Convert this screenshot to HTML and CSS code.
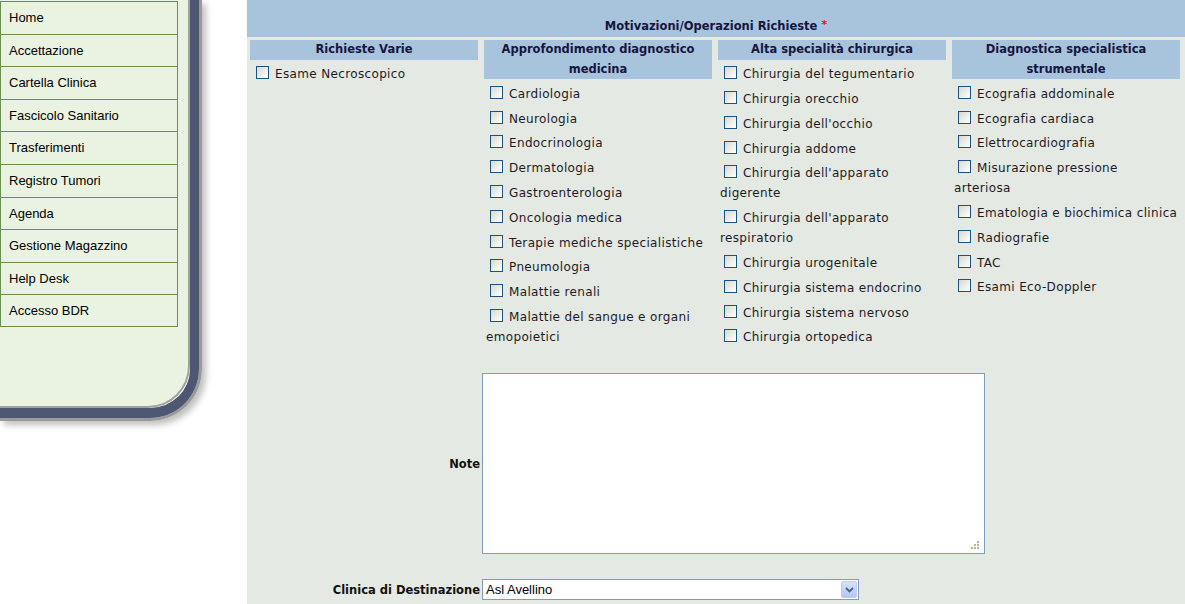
FILE: index.html
```html
<!DOCTYPE html>
<html lang="it">
<head>
<meta charset="utf-8">
<title>Motivazioni/Operazioni Richieste</title>
<link rel="stylesheet" href="styles.css">
</head>
<body>
<div class="page">
  <aside class="side">
    <div class="frame-outer">
      <div class="frame-dark">
        <div class="frame-inner">
          <nav class="menu">
            <a class="menu-link" href="#">Home</a>
            <a class="menu-link" href="#">Accettazione</a>
            <a class="menu-link" href="#">Cartella Clinica</a>
            <a class="menu-link" href="#">Fascicolo Sanitario</a>
            <a class="menu-link" href="#">Trasferimenti</a>
            <a class="menu-link" href="#">Registro Tumori</a>
            <a class="menu-link" href="#">Agenda</a>
            <a class="menu-link" href="#">Gestione Magazzino</a>
            <a class="menu-link" href="#">Help Desk</a>
            <a class="menu-link" href="#">Accesso BDR</a>
          </nav>
        </div>
      </div>
    </div>
  </aside>

  <main class="main">
    <div class="title-band">
      <span class="title">Motivazioni/Operazioni Richieste <span class="req">*</span></span>
    </div>

    <div class="cols">
      <section class="col">
        <h3 class="col-head">Richieste Varie</h3>
        <label class="item"><input type="checkbox" class="cb">Esame Necroscopico</label>
      </section>

      <section class="col">
        <h3 class="col-head">Approfondimento diagnostico medicina</h3>
        <label class="item"><input type="checkbox" class="cb">Cardiologia</label>
        <label class="item"><input type="checkbox" class="cb">Neurologia</label>
        <label class="item"><input type="checkbox" class="cb">Endocrinologia</label>
        <label class="item"><input type="checkbox" class="cb">Dermatologia</label>
        <label class="item"><input type="checkbox" class="cb">Gastroenterologia</label>
        <label class="item"><input type="checkbox" class="cb">Oncologia medica</label>
        <label class="item"><input type="checkbox" class="cb">Terapie mediche specialistiche</label>
        <label class="item"><input type="checkbox" class="cb">Pneumologia</label>
        <label class="item"><input type="checkbox" class="cb">Malattie renali</label>
        <label class="item"><input type="checkbox" class="cb">Malattie del sangue e organi emopoietici</label>
      </section>

      <section class="col">
        <h3 class="col-head">Alta specialità chirurgica</h3>
        <label class="item"><input type="checkbox" class="cb">Chirurgia del tegumentario</label>
        <label class="item"><input type="checkbox" class="cb">Chirurgia orecchio</label>
        <label class="item"><input type="checkbox" class="cb">Chirurgia dell'occhio</label>
        <label class="item"><input type="checkbox" class="cb">Chirurgia addome</label>
        <label class="item"><input type="checkbox" class="cb">Chirurgia dell'apparato digerente</label>
        <label class="item"><input type="checkbox" class="cb">Chirurgia dell'apparato respiratorio</label>
        <label class="item"><input type="checkbox" class="cb">Chirurgia urogenitale</label>
        <label class="item"><input type="checkbox" class="cb">Chirurgia sistema endocrino</label>
        <label class="item"><input type="checkbox" class="cb">Chirurgia sistema nervoso</label>
        <label class="item"><input type="checkbox" class="cb">Chirurgia ortopedica</label>
      </section>

      <section class="col">
        <h3 class="col-head">Diagnostica specialistica strumentale</h3>
        <label class="item"><input type="checkbox" class="cb">Ecografia addominale</label>
        <label class="item"><input type="checkbox" class="cb">Ecografia cardiaca</label>
        <label class="item"><input type="checkbox" class="cb">Elettrocardiografia</label>
        <label class="item"><input type="checkbox" class="cb">Misurazione pressione arteriosa</label>
        <label class="item"><input type="checkbox" class="cb">Ematologia e biochimica clinica</label>
        <label class="item"><input type="checkbox" class="cb">Radiografie</label>
        <label class="item"><input type="checkbox" class="cb">TAC</label>
        <label class="item"><input type="checkbox" class="cb">Esami Eco-Doppler</label>
      </section>
    </div>

    <div class="form">
      <label class="form-label" for="note">Note</label>
      <div class="form-field">
        <textarea id="note" class="note"></textarea>
        <span class="grip">
          <svg width="9" height="9" viewBox="0 0 9 9"><g fill="#b3b49f"><rect x="6" y="0" width="2" height="2"/><rect x="3" y="3" width="2" height="2"/><rect x="6" y="3" width="2" height="2"/><rect x="0" y="6" width="2" height="2"/><rect x="3" y="6" width="2" height="2"/><rect x="6" y="6" width="2" height="2"/></g></svg>
        </span>
      </div>

      <label class="form-label" for="clinica">Clinica di Destinazione</label>
      <div class="form-field">
        <div class="select-wrap">
          <select id="clinica" class="select">
            <option>Asl Avellino</option>
          </select>
          <span class="select-btn">
            <svg width="9" height="6" viewBox="0 0 9 6"><path d="M1 1 L4.5 4.5 L8 1" fill="none" stroke="#4d6185" stroke-width="1.8"/></svg>
          </span>
        </div>
      </div>
    </div>
  </main>
</div>
</body>
</html>
```

FILE: styles.css
```css
* { box-sizing: border-box; }

html, body {
  margin: 0;
  padding: 0;
  background: #ffffff;
}

.page {
  display: flex;
  align-items: flex-start;
  width: 1185px;
  min-height: 604px;
}

/* ---------- sidebar ---------- */
.side {
  width: 247px;
  flex: none;
}

.frame-outer {
  width: 202px;
  border-right: 3px solid #9a9a9a;
  border-bottom: 3px solid #9a9a9a;
  border-bottom-right-radius: 52px;
  box-shadow: 4px 4px 6px rgba(0, 0, 0, 0.25);
}

.frame-dark {
  border-right: 9px solid #4e5672;
  border-bottom: 10px solid #4e5672;
  border-bottom-right-radius: 49px;
}

.frame-inner {
  height: 408px;
  background: #eaf3e2;
  border-right: 2px solid #9ea29f;
  border-bottom: 2px solid #9ea29f;
  border-bottom-right-radius: 42px;
}

.menu {
  display: flex;
  flex-direction: column;
  width: 178px;
  padding-top: 1px;
}

.menu-link {
  display: block;
  height: 32.6px;
  line-height: 31.6px;
  padding-left: 8px;
  border-left: 1px solid #6b8f50;
  border-right: 1px solid #6b8f50;
  border-top: 1px solid #6b8f50;
  font-family: "Liberation Sans", Arial, sans-serif;
  font-size: 13px;
  color: #000;
  text-decoration: none;
}

.menu-link:last-child {
  border-bottom: 1px solid #6b8f50;
}

/* ---------- main ---------- */
.main {
  flex: 1;
  min-height: 604px;
  background: #e4e9e4;
  font-family: "DejaVu Sans", Verdana, sans-serif;
  font-size: 12px;
  color: #1e1a24;
}

.title-band {
  height: 37px;
  background: #a8c3dc;
  display: flex;
  align-items: flex-end;
  justify-content: center;
  padding-bottom: 2px;
}

.title {
  font-size: 11.5px;
  font-weight: bold;
  line-height: 17px;
  color: #15153f;
}

.req {
  color: #e8121b;
  font-size: 11px;
  vertical-align: 2px;
}

.cols {
  display: grid;
  grid-template-columns: repeat(4, 228px);
  column-gap: 6px;
  padding: 3px 3px 0 3px;
  align-items: start;
}

.col {
  display: flex;
  flex-direction: column;
}

.col-head {
  margin: 0;
  padding: 0 4px;
  background: #a8c3dc;
  font-size: 11.5px;
  font-weight: bold;
  line-height: 19.5px;
  text-align: center;
  color: #15153f;
}

.item {
  display: block;
  margin-top: 4.8px;
  padding: 0 2px;
  line-height: 20px;
  letter-spacing: 0.35px;
}

.cb {
  -webkit-appearance: none;
  appearance: none;
  width: 13px;
  height: 13px;
  margin: 0 6px 0 4px;
  vertical-align: -1px;
  border: 1px solid #1c5180;
  background: linear-gradient(135deg, #d8d8d0 0%, #efefea 55%, #ffffff 100%);
}

/* ---------- form ---------- */
.form {
  display: grid;
  grid-template-columns: 233px 1fr;
  column-gap: 2px;
  row-gap: 25px;
  margin-top: 26px;
  align-items: center;
}

.form-label {
  text-align: right;
  font-size: 11.5px;
  font-weight: bold;
  color: #111;
}

.form-field {
  position: relative;
  justify-self: start;
}

.note {
  display: block;
  width: 503px;
  height: 181px;
  margin: 0;
  border: 1px solid #7f9db9;
  background: #fff;
  resize: none;
  font-family: "Liberation Sans", Arial, sans-serif;
  font-size: 13px;
}

.grip {
  position: absolute;
  right: 5px;
  bottom: 4px;
  display: flex;
}

.select-wrap {
  position: relative;
  width: 377px;
  height: 21px;
}

.select {
  -webkit-appearance: none;
  appearance: none;
  display: block;
  width: 377px;
  height: 21px;
  margin: 0;
  padding: 0 0 0 3px;
  border: 1px solid #7f9db9;
  border-radius: 0;
  background: #fff;
  font-family: "Liberation Sans", Arial, sans-serif;
  font-size: 13px;
  color: #000;
}

.select-btn {
  position: absolute;
  right: 2px;
  top: 2px;
  width: 16px;
  height: 17px;
  display: flex;
  align-items: center;
  justify-content: center;
  border: 1px solid #b9cdf5;
  border-radius: 2px;
  background: linear-gradient(180deg, #d7e3fb 0%, #c0d2f8 60%, #b2c6f3 100%);
}
```
